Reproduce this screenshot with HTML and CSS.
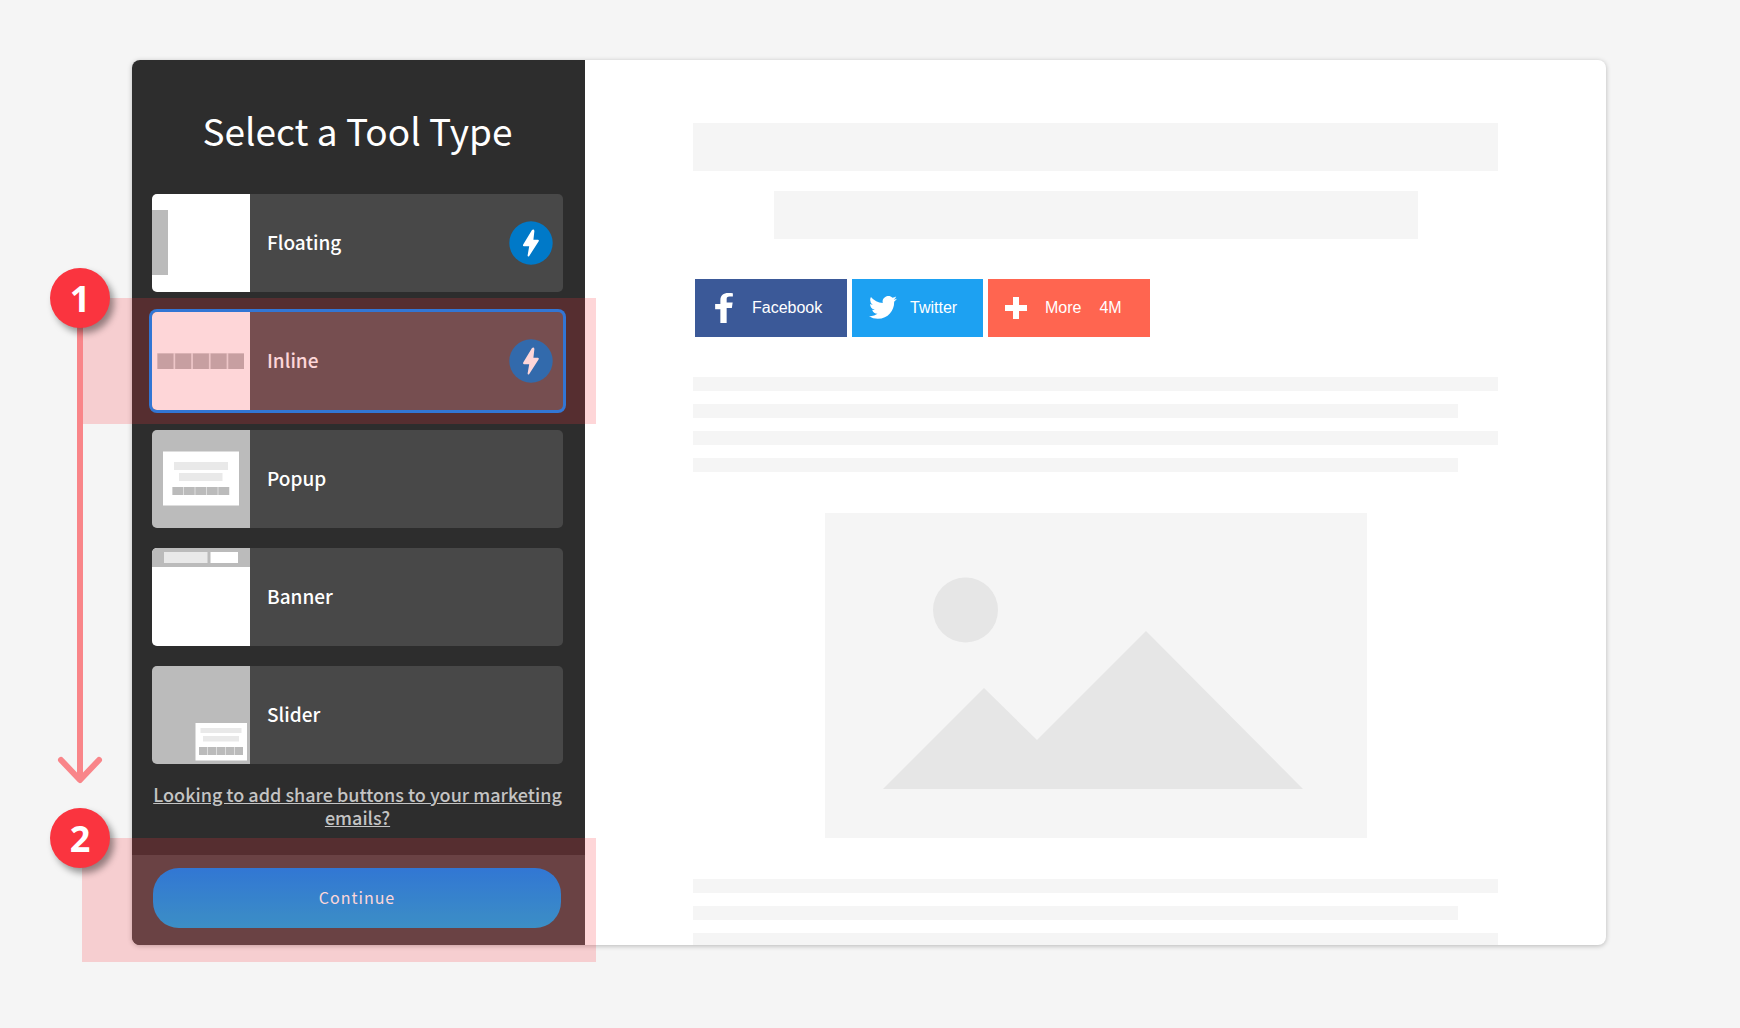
FILE: index.html
```html
<!DOCTYPE html>
<html lang="en">
<head>
<meta charset="utf-8">
<title>Select a Tool Type</title>
<meta name="viewport" content="width=device-width, initial-scale=1">
<link rel="stylesheet" href="styles.css">
</head>
<body>
<svg class="sprite" aria-hidden="true">
  <symbol id="bolt" viewBox="0 0 44 44">
    <circle cx="22" cy="22" r="21.7" fill="#0079c8"/>
    <path d="M23 9 14.200 23.600q-.7 1.400.7 1.600h5.300L18.600 34.500q.2 1.700 1.500.7L29.700 20.200q.6-1.300-.8-1.500h-4.500l1-8.800q-.4-2.200-2.400-.9z" fill="#fff"/>
  </symbol>
</svg>
<main class="wizard">
  <form class="panel">
    <h1 class="panel__title">Select a Tool Type</h1>
    <ul class="tools">
      <li class="tool">
        <label class="tool__card">
          <input class="tool__radio" type="radio" name="tool" value="floating">
          <svg class="tool__thumb" viewBox="0 0 98 98" aria-hidden="true"><path fill="#fff" d="M0 0h98v98H0z"/><path fill="#bbb" d="M0 16h16v65H0z"/></svg>
          <span class="tool__name">Floating</span>
          <svg class="tool__bolt" aria-hidden="true"><use href="#bolt"/></svg>
        </label>
      </li>
      <li class="tool">
        <label class="tool__card">
          <input class="tool__radio" type="radio" name="tool" value="inline" checked>
          <svg class="tool__thumb" viewBox="0 0 98 98" aria-hidden="true"><path fill="#fff" d="M0 0h98v98H0z"/><path fill="#ebebeb" d="M5 41h87v16H5z"/><path fill="#bbb" d="M5.500 41.500h16v15.500h-16zM23.200 41.500h16v15.500h-16zM40.900 41.500h16v15.500h-16zM58.600 41.500h16v15.500h-16zM76.300 41.500h15.700v15.500h-15.700z"/></svg>
          <span class="tool__name">Inline</span>
          <svg class="tool__bolt" aria-hidden="true"><use href="#bolt"/></svg>
        </label>
        <div class="callout callout--tool">
          <svg class="callout__arrow" viewBox="0 0 46 486" aria-hidden="true"><path d="M23 0v480M4 462l19 20 19-20" fill="none" stroke="#f98589" stroke-width="6" stroke-linecap="round" stroke-linejoin="round"/></svg>
          <span class="callout__step">1</span>
        </div>
      </li>
      <li class="tool">
        <label class="tool__card">
          <input class="tool__radio" type="radio" name="tool" value="popup">
          <svg class="tool__thumb" viewBox="0 0 98 98" aria-hidden="true"><path fill="#bbb" d="M0 0h98v98H0z"/><path fill="#fff" d="M11 21.500h76v54H11z"/><path fill="#e9e9e9" d="M22 32h54v8H22zM27 43h43.500v8H27z"/><path fill="#ddd" d="M20.500 57h57v8h-57z"/><path fill="#bbb" d="M20.500 57h10.500v8H20.500zM32 57h10.500v8H32zM43.500 57H54v8H43.500zM55 57h10.500v8H55zM66.500 57H77v8H66.500z"/></svg>
          <span class="tool__name">Popup</span>
        </label>
      </li>
      <li class="tool">
        <label class="tool__card">
          <input class="tool__radio" type="radio" name="tool" value="banner">
          <svg class="tool__thumb" viewBox="0 0 98 98" aria-hidden="true"><path fill="#fff" d="M0 0h98v98H0z"/><path fill="#bbb" d="M0 0h98v19H0z"/><path fill="#e9e9e9" d="M12 4h43.500v11H12z"/><path fill="#fff" d="M58.500 4H86v11H58.500z"/></svg>
          <span class="tool__name">Banner</span>
        </label>
      </li>
      <li class="tool">
        <label class="tool__card">
          <input class="tool__radio" type="radio" name="tool" value="slider">
          <svg class="tool__thumb" viewBox="0 0 98 98" aria-hidden="true"><path fill="#bbb" d="M0 0h98v98H0z"/><path fill="#fff" d="M43.500 57H95v37.500H43.500z"/><path fill="#e9e9e9" d="M48.500 62h41v5h-41zM51 70h36v5.500H51z"/><path fill="#ddd" d="M47 81h44v8H47z"/><path fill="#bbb" d="M47 81h8v8h-8zM56 81h8v8h-8zM65 81h8v8h-8zM74 81h8v8h-8zM83 81h8v8h-8z"/></svg>
          <span class="tool__name">Slider</span>
        </label>
      </li>
    </ul>
    <p class="panel__hint"><a class="panel__link" href="#">Looking to add share buttons to your marketing emails?</a></p>
    <div class="panel__footer">
      <button class="continue" type="button">Continue</button>
      <div class="callout callout--footer">
        <span class="callout__step">2</span>
      </div>
    </div>
  </form>
  <section class="preview" aria-label="Preview">
    <div class="block"></div>
    <div class="block block--narrow"></div>
    <div class="share">
      <button class="share__btn share__btn--facebook" type="button">
        <svg class="share__f" viewBox="9 5 13 22" aria-hidden="true"><path fill="#fff" d="M22 5.160c-.406-.054-1.806-.16-3.430-.16-3.400 0-5.733 1.825-5.733 5.170v2.882H9v3.913h3.837V27h4.604V15.965h3.823l.587-3.913h-4.410v-2.500c0-1.123.347-1.903 2.198-1.903H22z"/></svg>
        <span>Facebook</span>
      </button>
      <button class="share__btn share__btn--twitter" type="button">
        <svg class="share__bird" viewBox="6 8 22 18" aria-hidden="true"><path fill="#fff" d="M27.996 10.116c-.81.36-1.680.602-2.592.71a4.526 4.526 0 0 0 1.984-2.496 9.037 9.037 0 0 1-2.866 1.095 4.513 4.513 0 0 0-7.690 4.116 12.810 12.810 0 0 1-9.300-4.715 4.490 4.490 0 0 0-.612 2.270 4.510 4.510 0 0 0 2.008 3.755 4.495 4.495 0 0 1-2.044-.564v.057a4.515 4.515 0 0 0 3.620 4.425 4.520 4.520 0 0 1-2.040.077 4.517 4.517 0 0 0 4.217 3.134 9.055 9.055 0 0 1-5.604 1.930A9.180 9.180 0 0 1 6 23.850a12.773 12.773 0 0 0 6.918 2.027c8.300 0 12.840-6.876 12.840-12.840 0-.195-.005-.39-.014-.583a9.172 9.172 0 0 0 2.252-2.336"/></svg>
        <span>Twitter</span>
      </button>
      <button class="share__btn share__btn--more" type="button">
        <svg class="share__plus" viewBox="0 0 22 22" aria-hidden="true"><path fill="#fff" d="M8 0h6v8h8v6h-8v8H8v-8H0V8h8z"/></svg>
        <span>More</span>
        <span>4M</span>
      </button>
    </div>
    <div class="lines">
      <div class="line"></div>
      <div class="line line--short"></div>
      <div class="line"></div>
      <div class="line line--short"></div>
    </div>
    <svg class="picture" viewBox="0 0 542 325" aria-hidden="true"><path fill="#f5f5f5" d="M0 0h542v325H0z"/><circle cx="140.500" cy="97" r="32.500" fill="#e6e6e6"/><path fill="#e6e6e6" d="M58 276 159 175l53 52L321 118l157 158z"/></svg>
    <div class="lines">
      <div class="line"></div>
      <div class="line line--short"></div>
      <div class="line"></div>
    </div>
  </section>
</main>
</body>
</html>
```
FILE: styles.css
```css
* {
  box-sizing: border-box;
}

body {
  margin: 0;
  padding: 60px 134px 83px 132px;
  background: #f5f5f5;
  font-family: "Noto Sans CJK SC", "Noto Sans", sans-serif;
}

.sprite {
  display: none;
}

.wizard {
  display: grid;
  grid-template-columns: 453px minmax(0, 1fr);
  border-radius: 8px;
  background: #fff;
  box-shadow: 0 1px 5px rgba(0, 0, 0, 0.25);
}

/* Left panel */

.panel {
  position: relative;
  z-index: 1;
  border-radius: 8px 0 0 8px;
  background: #2d2d2d;
  color: #fff;
}

.panel__title {
  margin: 0;
  padding: 48px 22px 42px 20px;
  font-size: 37px;
  font-weight: 400;
  line-height: 44px;
  text-align: center;
}

.tools {
  display: grid;
  gap: 20px;
  margin: 0;
  padding: 0 22px 0 20px;
  list-style: none;
}

.tool {
  position: relative;
}

.tool__card {
  display: flex;
  align-items: center;
  height: 98px;
  padding-right: 10px;
  border-radius: 5px;
  background: #484848;
  cursor: pointer;
}

.tool__card:has(:checked) {
  background: #565656;
  box-shadow: 0 0 0 3px #0088fa;
}

.tool__radio {
  position: absolute;
  opacity: 0;
}

.tool__thumb {
  width: 98px;
  height: 98px;
  border-radius: 5px 0 0 5px;
}

.tool__name {
  flex: 1;
  padding: 0 0 2px 17px;
  font-size: 19px;
  font-weight: 500;
  line-height: 28px;
}

.tool__bolt {
  width: 44px;
  height: 44px;
}

.panel__hint {
  margin: 0;
  padding: 19px 22px 26px 20px;
  font-size: 18px;
  line-height: 23px;
  text-align: center;
}

.panel__link {
  color: #c4c4c4;
  font-weight: 500;
}

.panel__footer {
  position: relative;
  padding: 13px 24px 17px 21px;
  border-radius: 0 0 0 8px;
  background: #474747;
}

.continue {
  display: block;
  width: 100%;
  height: 60px;
  padding: 0 0 2px;
  border: 0;
  border-radius: 26px;
  background: linear-gradient(#0088fa, #0da6e8);
  color: #fff;
  font: inherit;
  font-size: 16px;
  letter-spacing: 1px;
}

/* Numbered callouts */

.callout {
  position: absolute;
  background: rgba(250, 50, 60, 0.2);
  pointer-events: none;
}

.callout--tool {
  inset: -14px -33px -14px -69px;
}

.callout--footer {
  inset: -17px -11px -17px -50px;
}

.callout__step {
  position: absolute;
  top: -30px;
  left: -33px;
  width: 60px;
  height: 60px;
  border-radius: 50%;
  background: #fa343f;
  box-shadow: 4px 5px 7px rgba(0, 0, 0, 0.4);
  color: #fff;
  font: bold 36px/62px "Open Sans", sans-serif;
  text-align: center;
}

.callout--footer .callout__step {
  left: -32px;
}

.callout__arrow {
  position: absolute;
  top: 0;
  left: -26px;
  width: 46px;
  height: 486px;
}

/* Right-hand preview */

.preview {
  contain: size;
  display: flex;
  flex-direction: column;
  align-items: center;
  overflow: hidden;
  padding: 63px 108px 0;
  border-radius: 0 8px 8px 0;
}

.block {
  flex: none;
  width: 100%;
  height: 48px;
  margin-bottom: 20px;
  background: #f5f5f5;
}

.block--narrow {
  width: 80%;
  margin-bottom: 40px;
}

.share {
  display: flex;
  align-self: flex-start;
  gap: 5px;
  margin-bottom: 40px;
  padding-left: 2px;
}

.share__btn {
  display: flex;
  align-items: center;
  height: 58px;
  padding: 0 0 1px;
  border: 0;
  color: #fff;
  font: 16px/20px "Liberation Sans", Arial, sans-serif;
}

.share__btn--facebook {
  gap: 19px;
  width: 152px;
  padding-left: 20px;
  background: #3b5998;
}

.share__btn--twitter {
  gap: 13px;
  width: 131px;
  padding-left: 17px;
  background: #1da1f2;
}

.share__btn--more {
  gap: 18px;
  width: 162px;
  padding-left: 17px;
  background: #ff6550;
}

.share__f {
  width: 18px;
  height: 30px;
}

.share__bird {
  width: 28px;
  height: 23px;
}

.share__plus {
  width: 22px;
  height: 22px;
}

.lines {
  display: grid;
  flex: none;
  gap: 13px;
  width: 100%;
}

.line {
  height: 14px;
  background: #f5f5f5;
}

.line--short {
  width: 95%;
}

.picture {
  flex: none;
  width: 542px;
  max-width: 100%;
  margin: 41px 0;
}
```
